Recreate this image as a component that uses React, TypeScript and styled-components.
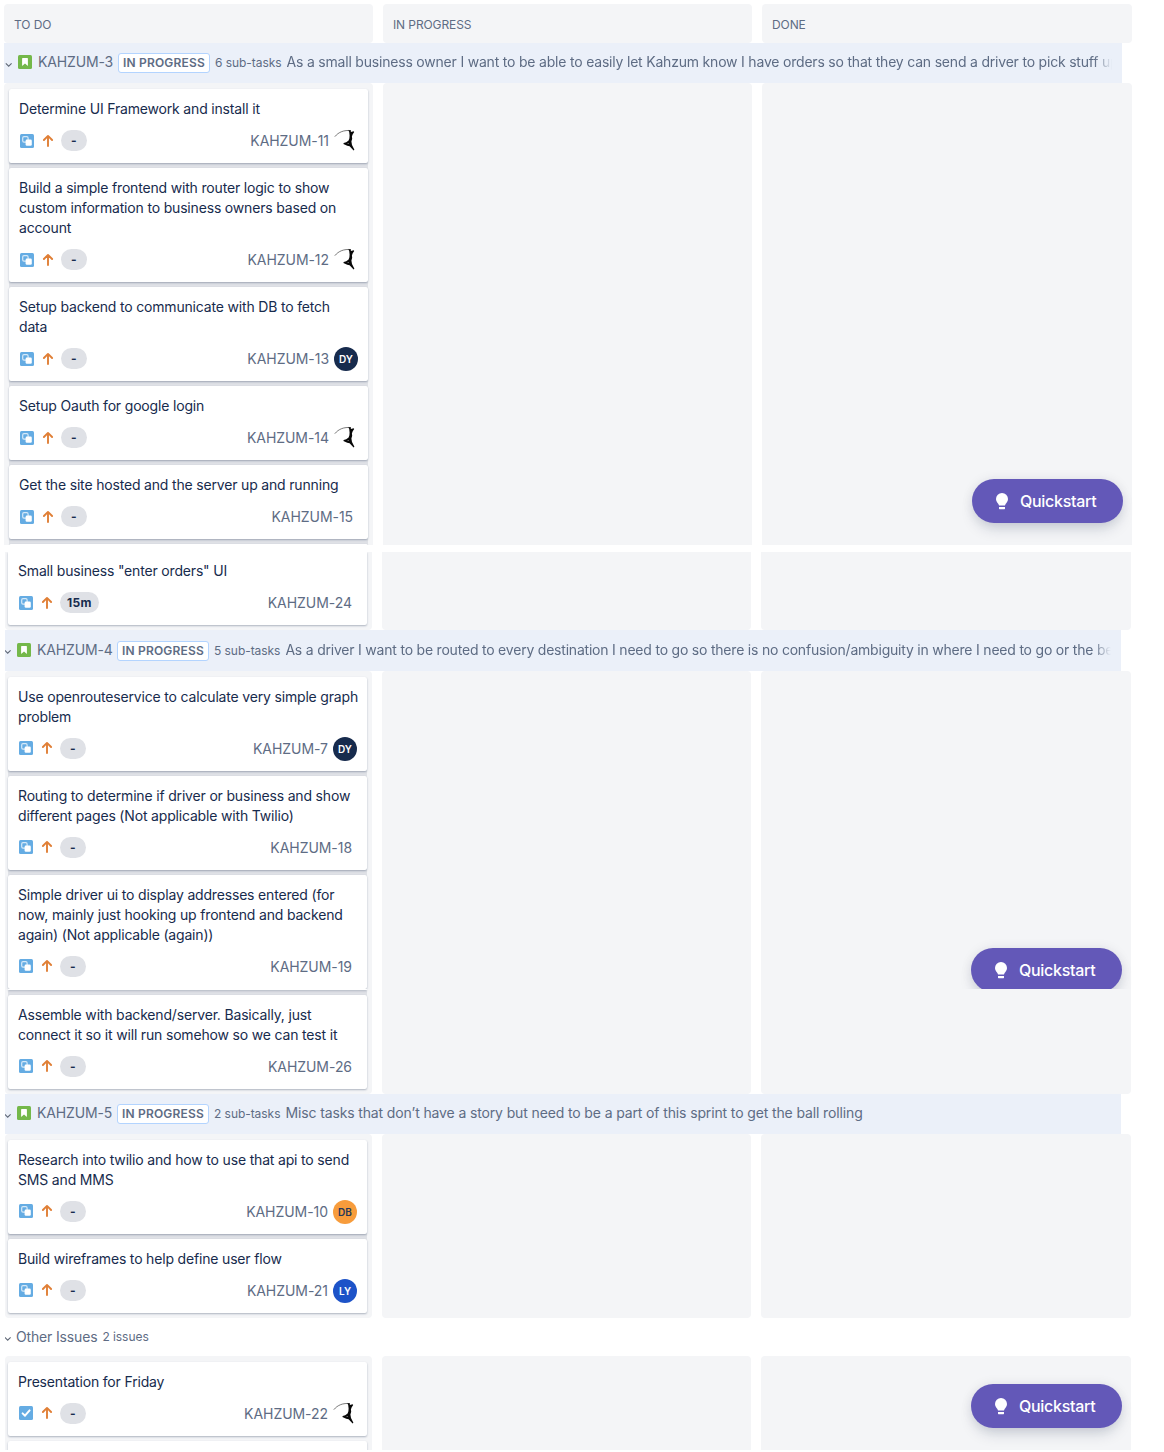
import React from "react";
import styled, { createGlobalStyle, css } from "styled-components";

const Global = createGlobalStyle`
  * { box-sizing: border-box; }
  body { margin: 0; background: #fff; font-family: Inter, "Liberation Sans", sans-serif; font-size: 14px; color: #172b4d; }
`;

const Page = styled.main`
  width: 1164px;
  height: 1452px;
  padding-top: 4px;
  overflow: hidden;
`;

const Panel = styled.section<{ $height: number; $left: number; $top?: number }>`
  position: relative;
  overflow: hidden;
  height: ${(p) => p.$height}px;
  margin-left: ${(p) => p.$left}px;
  margin-top: ${(p) => p.$top ?? 0}px;
`;

const Columns = styled.div<{ $height: number; $first: number }>`
  display: grid;
  grid-template-columns: ${(p) => p.$first}px 369px 370px;
  column-gap: 10px;
  height: ${(p) => p.$height}px;
`;

const Column = styled.div<{ $flatTop?: boolean; $flatBottom?: boolean; $pad?: number }>`
  background: #f4f5f7;
  border-radius: ${(p) => (p.$flatTop ? "0 0" : "4px 4px")} ${(p) => (p.$flatBottom ? "0 0" : "4px 4px")};
  padding: ${(p) => p.$pad ?? 6}px 5px 0 0;
  min-height: 0;
`;

const ColumnTitle = styled.div`
  display: flex;
  align-items: center;
  height: 39px;
  padding: 2px 10px 0;
  border-radius: 4px;
  background: #f4f5f7;
  color: #5e6c84;
  font-size: 12px;
  letter-spacing: -0.1px;
`;

const Stack = styled.div<{ $inset: number; $gap?: string }>`
  display: flex;
  flex-direction: column;
  gap: 5px;
  margin-left: ${(p) => p.$inset}px;
  background: ${(p) => p.$gap ?? "#dfe1e6"};
  border-radius: 3px;
`;

const CardBox = styled.article<{ $height: number; $flatTop?: boolean; $empty?: boolean }>`
  display: flex;
  flex-direction: column;
  flex: none;
  justify-content: space-between;
  height: ${(p) => p.$height}px;
  padding: ${(p) => (p.$empty ? 0 : 10)}px;
  background: #fff;
  border-radius: 2px;
  box-shadow: 0 1px 2px rgba(9, 30, 66, 0.3);
  ${(p) => p.$flatTop && css`border-top-left-radius: 0; border-top-right-radius: 0; padding-top: 9px;`}
`;

const Summary = styled.p`
  margin: 0;
  line-height: 20px;
  white-space: pre;
  letter-spacing: -0.175px;
`;

const Footer = styled.div`
  display: flex;
  align-items: center;
  height: 24px;
`;

const Glyphs = styled.span<{ $lift?: boolean }>`
  display: flex;
  align-items: center;
  gap: 7px;
  margin: 0 6px ${(p) => (p.$lift ? 2 : 0)}px 1px;
`;

const Estimate = styled.span`
  display: flex;
  align-self: flex-start;
  align-items: center;
  justify-content: center;
  min-width: 26px;
  height: 21px;
  margin-top: 1px;
  padding: 0 7px;
  border-radius: 11px;
  background: #dfe1e6;
  font-size: 12px;
  font-weight: 700;
  letter-spacing: 0.3px;
`;

const Key = styled.span`
  margin-left: auto;
  margin-right: 5px;
  line-height: 18px;
  color: #5e6c84;
  letter-spacing: -0.05px;
`;

const Avatar = styled.span<{ $bg: string; $fg: string }>`
  display: flex;
  align-items: center;
  justify-content: center;
  width: 24px;
  height: 24px;
  border-radius: 50%;
  background: ${(p) => p.$bg};
  color: ${(p) => p.$fg};
  font-size: 10px;
  font-weight: 600;
`;

const Swimlane = styled.header<{ $height: number; $width: number; $plain?: boolean }>`
  display: flex;
  align-items: center;
  width: ${(p) => p.$width}px;
  height: ${(p) => p.$height}px;
  padding-right: 10px;
  background: ${(p) => (p.$plain ? "transparent" : "#ebf0f9")};
  color: #5e6c84;
  white-space: nowrap;
  overflow: hidden;
`;

const Chevron = styled.span<{ $start: number }>`
  display: flex;
  flex: none;
  margin: 3px 5px 0 ${(p) => p.$start}px;
`;

const StoryGlyph = styled.span<{ $lift: number }>`
  display: flex;
  flex: none;
  margin-bottom: ${(p) => p.$lift}px;
`;

const StoryKey = styled.span`
  flex: none;
  width: 75px;
  margin: -3px 5px 0 6px;
  letter-spacing: -0.15px;
`;

const Lozenge = styled.span<{ $drop: number }>`
  display: flex;
  align-items: center;
  justify-content: center;
  flex: none;
  width: 92px;
  height: 20px;
  margin-top: ${(p) => p.$drop}px;
  padding-bottom: 1px;
  border: 1px solid #b3d4ff;
  border-radius: 3px;
  background: #fff;
  font-size: 12px;
  font-weight: 600;
  letter-spacing: 0.18px;
`;

const Count = styled.span`
  flex: none;
  margin: -1px 5px 0;
  font-size: 12px;
  letter-spacing: -0.05px;
`;

const StoryText = styled.span<{ $fade?: boolean; $tracking: number }>`
  flex: 1;
  min-width: 0;
  margin-top: -2px;
  line-height: 20px;
  letter-spacing: ${(p) => p.$tracking}px;
  overflow: hidden;
  ${(p) => p.$fade && css`mask-image: linear-gradient(to right, #000 calc(100% - 18px), transparent);`}
`;

const OtherLabel = styled.span`
  margin: -1px 0 0 -1px;
  letter-spacing: -0.16px;
`;

const QuickstartButton = styled.button<{ $top: number; $left: number }>`
  position: absolute;
  top: ${(p) => p.$top}px;
  left: ${(p) => p.$left}px;
  display: flex;
  align-items: center;
  gap: 12px;
  width: 151px;
  height: 44px;
  padding: 0 0 0 24px;
  border: 0;
  border-radius: 22px;
  background: #6358b8;
  color: #fff;
  font: 500 16px Inter, sans-serif;
  letter-spacing: -0.28px;
  box-shadow: 0 8px 16px -4px rgba(9, 30, 66, 0.2), 0 0 12px rgba(9, 30, 66, 0.08);
`;

const SubtaskIcon = () => (
  <svg width="14" height="14" viewBox="0 0 14 14">
    <rect width="14" height="14" rx="1.5" fill="#65ace3" />
    <rect x="2.7" y="2.7" width="5.4" height="5.4" rx="1.3" fill="none" stroke="#d6e9f8" strokeWidth="1.2" />
    <rect x="5.6" y="5.6" width="6.2" height="6.2" rx="1.3" fill="#fff" />
  </svg>
);

const TaskIcon = () => (
  <svg width="14" height="14" viewBox="0 0 14 14">
    <rect width="14" height="14" rx="1.5" fill="#65ace3" />
    <path d="M3.6 7.4 6 9.7 10.6 4.4" fill="none" stroke="#fff" strokeWidth="2" strokeLinecap="round" strokeLinejoin="round" />
  </svg>
);

const StoryIcon = () => (
  <svg width="14" height="14" viewBox="0 0 14 14">
    <rect width="14" height="14" rx="1.5" fill="#74b84a" />
    <path d="M4.1 3.6Q4.1 3 4.7 3H9.3Q9.9 3 9.9 3.6V11L7 8.4 4.1 11Z" fill="#fff" />
  </svg>
);

const PriorityIcon = () => (
  <svg width="14" height="14" viewBox="0 0 14 14">
    <path d="M7 12.1V2M2.9 6 7 1.9 11.1 6" fill="none" stroke="#e07f36" strokeWidth="1.9" strokeLinecap="round" strokeLinejoin="round" />
  </svg>
);

const ChevronIcon = () => (
  <svg width="8" height="6" viewBox="0 0 8 6">
    <path d="M0.8 1.3 3.7 4.2 6.6 1.3" fill="none" stroke="#5f6876" strokeWidth="1.1" />
  </svg>
);

const ClimberIcon = () => (
  <svg width="24" height="24" viewBox="0 0 24 24">
    <path d="M.8 7.7C4.6 3 10 .9 17 1.6" fill="none" stroke="#444" strokeWidth=".7" />
    <path d="M14.2 1.1 16.8 1.4 16.9 3 19.6 2.3 20.2 3 18.6 5.4 17.9 7.4 18.2 9.8 17.4 12.6 18 16 20.4 20.8 19.6 21.4 15.6 17.2 13.2 16.8 9.4 14.9 9.7 13.9 12.2 13.2 14.6 11.4 15.4 9.2 15.6 6.6 15.2 3Z" fill="#080808" />
    <path d="M13.4 14.2 14.6 13.9 14.3 15.1Z" fill="#fff" />
  </svg>
);

const BulbIcon = () => (
  <svg width="12" height="17" viewBox="0 0 12 17">
    <path d="M6 0A6 6 0 0 1 12 6C12 8.4 10.7 9.5 9.6 11.1L9 12.5H3L2.4 11.1C1.3 9.5 0 8.4 0 6A6 6 0 0 1 6 0Z" fill="#fff" />
    <path d="M3 14.1H9V15.6Q9 16.2 8.4 16.2H3.6Q3 16.2 3 15.6Z" fill="#fff" />
  </svg>
);

type Who = "climber" | "DY" | "DB" | "LY";
const avatarColours: Record<string, [string, string]> = {
  DY: ["#172b4d", "#fff"],
  DB: ["#f79c3c", "#253858"],
  LY: ["#1d53c8", "#fff"],
};

interface CardProps {
  lines: string[];
  id: string;
  who?: Who;
  estimate?: string;
  task?: boolean;
  height?: number;
  flatTop?: boolean;
  lift?: boolean;
}

const Card = ({ lines, id, who, estimate = "-", task, height, flatTop, lift }: CardProps) => (
  <CardBox $height={height ?? 54 + lines.length * 20} $flatTop={flatTop}>
    <Summary>{lines.join("\n")}</Summary>
    <Footer>
      <Glyphs $lift={lift}>
        {task ? <TaskIcon /> : <SubtaskIcon />}
        <PriorityIcon />
      </Glyphs>
      <Estimate>{estimate}</Estimate>
      <Key>{id}</Key>
      {who === "climber" && <ClimberIcon />}
      {who && who !== "climber" && (
        <Avatar $bg={avatarColours[who][0]} $fg={avatarColours[who][1]}>{who}</Avatar>
      )}
    </Footer>
  </CardBox>
);

interface LaneProps {
  start: number;
  width: number;
  height: number;
  id: string;
  count: string;
  text: string;
  tracking: number;
  fade?: boolean;
  drop?: number;
}

const Lane = ({ start, width, height, id, count, text, tracking, fade, drop = 0 }: LaneProps) => (
  <Swimlane $height={height} $width={width}>
    <Chevron $start={start}><ChevronIcon /></Chevron>
    <StoryGlyph $lift={2 - drop}><StoryIcon /></StoryGlyph>
    <StoryKey>{id}</StoryKey>
    <Lozenge $drop={drop}>IN PROGRESS</Lozenge>
    <Count>{count}</Count>
    <StoryText $fade={fade} $tracking={tracking}>{text}</StoryText>
  </Swimlane>
);

const Quickstart = ({ top, left }: { top: number; left: number }) => (
  <QuickstartButton $top={top} $left={left}><BulbIcon />Quickstart</QuickstartButton>
);

export default function App() {
  return (
    <>
      <Global />
      <Page>
        <Panel $height={541} $left={4}>
          <Columns $height={39} $first={369}>
            <ColumnTitle>TO DO</ColumnTitle>
            <ColumnTitle>IN PROGRESS</ColumnTitle>
            <ColumnTitle>DONE</ColumnTitle>
          </Columns>
          <Lane start={1} width={1118} height={40} id="KAHZUM-3" count="6 sub-tasks" fade tracking={-0.2}
            text="As a small business owner I want to be able to easily let Kahzum know I have orders so that they can send a driver to pick stuff up" />
          <Columns $height={462} $first={369}>
            <Column $flatBottom>
              <Stack $inset={5}>
                <Card lines={["Determine UI Framework and install it"]} id="KAHZUM-11" who="climber" />
                <Card lines={["Build a simple frontend with router logic to show", "custom information to business owners based on", "account"]} id="KAHZUM-12" who="climber" />
                <Card lines={["Setup backend to communicate with DB to fetch", "data"]} id="KAHZUM-13" who="DY" />
                <Card lines={["Setup Oauth for google login"]} id="KAHZUM-14" who="climber" />
                <Card lines={["Get the site hosted and the server up and running"]} id="KAHZUM-15" />
                <CardBox $height={10} $empty />
              </Stack>
            </Column>
            <Column $flatBottom />
            <Column $flatBottom />
          </Columns>
          <Quickstart top={475} left={968} />
        </Panel>

        <Panel $height={437} $left={5} $top={7}>
          <Columns $height={78} $first={367}>
            <Column $flatTop $pad={0}>
              <Stack $inset={3}>
                <Card lines={['Small business "enter orders" UI']} id="KAHZUM-24" estimate="15m" height={73} flatTop />
              </Stack>
            </Column>
            <Column $flatTop />
            <Column $flatTop />
          </Columns>
          <Lane start={-1} width={1116} height={41} id="KAHZUM-4" count="5 sub-tasks" fade drop={1} tracking={-0.21}
            text="As a driver I want to be routed to every destination I need to go so there is no confusion/ambiguity in where I need to go or the best" />
          <Columns $height={318} $first={367}>
            <Column $flatBottom>
              <Stack $inset={3}>
                <Card lift lines={["Use openrouteservice to calculate very simple graph", "problem"]} id="KAHZUM-7" who="DY" />
                <Card lift lines={["Routing to determine if driver or business and show", "different pages (Not applicable with Twilio)"]} id="KAHZUM-18" />
                <Card lift lines={["Simple driver ui to display addresses entered (for", "now, mainly just hooking up frontend and backend", "again) (Not applicable (again))"]} id="KAHZUM-19" />
              </Stack>
            </Column>
            <Column $flatBottom />
            <Column $flatBottom />
          </Columns>
          <Quickstart top={396} left={966} />
        </Panel>

        <Panel $height={461} $left={5}>
          <Columns $height={105} $first={367}>
            <Column $flatTop $pad={0}>
              <Stack $inset={3}>
                <CardBox $height={1} $empty />
                <Card lift lines={["Assemble with backend/server. Basically, just", "connect it so it will run somehow so we can test it"]} id="KAHZUM-26" />
              </Stack>
            </Column>
            <Column $flatTop />
            <Column $flatTop />
          </Columns>
          <Lane start={-1} width={1116} height={40} id="KAHZUM-5" count="2 sub-tasks" tracking={-0.13}
            text="Misc tasks that don’t have a story but need to be a part of this sprint to get the ball rolling" />
          <Columns $height={184} $first={367}>
            <Column>
              <Stack $inset={3}>
                <Card lift lines={["Research into twilio and how to use that api to send", "SMS and MMS"]} id="KAHZUM-10" who="DB" />
                <Card lift lines={["Build wireframes to help define user flow"]} id="KAHZUM-21" who="LY" />
              </Stack>
            </Column>
            <Column />
            <Column />
          </Columns>
          <Swimlane $height={38} $width={1116} $plain>
            <Chevron $start={-1}><ChevronIcon /></Chevron>
            <OtherLabel>Other Issues</OtherLabel>
            <Count>2 issues</Count>
          </Swimlane>
          <Columns $height={105} $first={367}>
            <Column $flatBottom>
              <Stack $inset={3} $gap="#f4f5f7">
                <Card lift lines={["Presentation for Friday"]} id="KAHZUM-22" who="climber" task />
                <CardBox $height={20} $empty />
              </Stack>
            </Column>
            <Column $flatBottom />
            <Column $flatBottom />
          </Columns>
          <Quickstart top={395} left={966} />
        </Panel>
      </Page>
    </>
  );
}
